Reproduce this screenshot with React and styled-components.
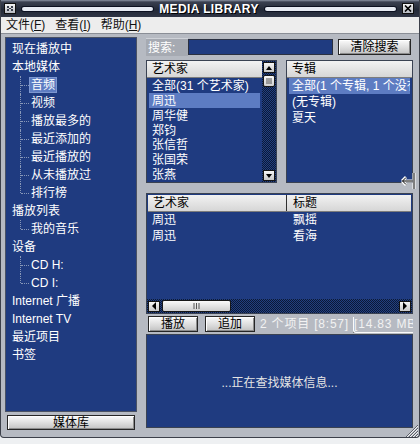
import React from "react";
import styled, { createGlobalStyle } from "styled-components";

const FONT = `"Liberation Sans", "Noto Sans CJK SC", sans-serif`;
const BLUE = "#1f3b80";
const HILITE = "#5d7cc2";
const FRAME = "#b6bac2";
const DITHER = `repeating-conic-gradient(#22407f 0 25%, #0b1838 0 50%) 0 0 / 2px 2px`;

const Global = createGlobalStyle`
  * { box-sizing: border-box; }
  html, body { margin: 0; padding: 0; background: #eef0f2; }
  body { font-family: ${FONT}; font-size: 12px; }
`;

const Window = styled.div`
  position: relative;
  width: 420px;
  height: 438px;
  display: flex;
  flex-direction: column;
  background: ${FRAME};
  border: 1px solid #3c404a;
  border-top: none;
  border-radius: 0 0 4px 4px;
  overflow: hidden;
`;

const TitleBar = styled.div`
  height: 17px;
  flex: none;
  display: flex;
  align-items: center;
  gap: 6px;
  padding: 0 5px 0 3px;
  background: linear-gradient(#8a92a2 0, #3a4050 2px, #232937 55%, #2f3545 100%);
`;

const Groove = styled.div`
  flex: 1;
  height: 4px;
  border-radius: 3px;
  background: #e6eaf2;
  box-shadow: 0 0 0 1px #0c1020;
`;

const Title = styled.div`
  color: #fff;
  font: bold 12px "Liberation Sans", sans-serif;
  letter-spacing: 0.4px;
  text-shadow: 1px 1px 0 #000;
  white-space: nowrap;
`;

const TitleBox = styled.div`
  width: 12px;
  height: 11px;
  display: flex;
  align-items: center;
  justify-content: center;
  background: linear-gradient(#f4f4f4, #b8bcc4);
  border: 1px solid #101010;
`;

const MenuBar = styled.div`
  height: 17px;
  flex: none;
  display: flex;
  align-items: center;
  gap: 10px;
  padding-left: 5px;
  background: #ededed;
  border-bottom: 1px solid #8a8e96;
`;

const MenuItem = styled.span`
  color: #111;
  line-height: 16px;
  white-space: nowrap;
`;

const Body = styled.div`
  flex: 1;
  min-height: 0;
  display: flex;
  padding: 3px 6px 7px 4px;
`;

const LeftPane = styled.div`
  width: 132px;
  flex: none;
  display: flex;
  flex-direction: column;
`;

const TreeBox = styled.div`
  flex: 1;
  background: ${BLUE};
  border: 1px solid #4a5264;
  padding-top: 2px;
`;

const TreeRow = styled.div`
  position: relative;
  height: 18px;
  line-height: 18px;
  padding-left: ${(p) => (p.$child ? 23 : 6)}px;
  color: #fff;
  white-space: nowrap;
  ${(p) =>
    p.$child &&
    `
    &::before {
      content: "";
      position: absolute;
      left: 14px;
      top: 0;
      height: ${p.$last ? "9px" : "18px"};
      border-left: 1px dotted #8797b8;
    }
    &::after {
      content: "";
      position: absolute;
      left: 15px;
      top: 9px;
      width: 8px;
      border-top: 1px dotted #8797b8;
    }
  `}
`;

const TreeLabel = styled.span`
  display: inline-block;
  height: 16px;
  line-height: 16px;
  padding: 0 2px;
  background: ${(p) => (p.$sel ? HILITE : "transparent")};
  box-shadow: ${(p) => (p.$sel ? "inset 0 0 0 1px #7d97d0" : "none")};
`;

const Button = styled.div`
  width: ${(p) => (p.$w ? `${p.$w}px` : "auto")};
  height: ${(p) => p.$h || 16}px;
  flex: none;
  display: flex;
  align-items: center;
  justify-content: center;
  background: linear-gradient(#fbfbfb, #dadada 60%, #c2c2c2);
  border: 1px solid #262626;
  box-shadow: inset 1px 1px 0 #fff, inset -1px -1px 0 #8c8c8c;
  color: #000;
  line-height: 1;
  white-space: nowrap;
`;

const LibButton = styled(Button)`
  margin-top: 3px;
  margin-left: 2px;
`;

const VSplit = styled.div`
  width: 8px;
  flex: none;
`;

const RightPane = styled.div`
  width: 268px;
  flex: none;
  display: flex;
  flex-direction: column;
  padding-left: 1px;
`;

const SearchRow = styled.div`
  height: 20px;
  flex: none;
  display: flex;
  align-items: center;
`;

const SearchLabel = styled.div`
  width: 42px;
  height: 18px;
  line-height: 18px;
  padding-left: 2px;
  color: #fff;
  background: #a6aab2;
  border-top: 1px solid #cfd2d8;
`;

const SearchInput = styled.div`
  width: 145px;
  height: 16px;
  background: ${BLUE};
  border: 1px solid #2a3040;
  margin-right: 5px;
`;

const TopLists = styled.div`
  height: 123px;
  flex: none;
  margin-top: 3px;
  display: flex;
  gap: 9px;
`;

const ListBox = styled.div`
  width: ${(p) => p.$w}px;
  flex: ${(p) => (p.$w ? "none" : 1)};
  display: flex;
  background: ${BLUE};
  border: 1px solid #3a4252;
  overflow: hidden;
`;

const ListCol = styled.div`
  flex: 1;
  min-width: 0;
  display: flex;
  flex-direction: column;
`;

const Header = styled.div`
  height: 17px;
  flex: none;
  display: flex;
  background: linear-gradient(#f2f2f2, #d6d6d6);
  border-bottom: 1px solid #7c7c7c;
  color: #000;
`;

const HeaderCell = styled.div`
  width: ${(p) => (p.$w ? `${p.$w}px` : "auto")};
  flex: ${(p) => (p.$w ? "none" : 1)};
  line-height: 16px;
  padding-left: ${(p) => p.$pad || 5}px;
  border-right: ${(p) => (p.$divider ? "1px solid #303030" : "none")};
  white-space: nowrap;
`;

const Row = styled.div`
  height: 16px;
  line-height: 16px;
  margin: 0 2px;
  padding-left: 3px;
  color: #fff;
  white-space: nowrap;
  overflow: hidden;
  background: ${(p) => (p.$sel ? HILITE : "transparent")};
`;

const VScroll = styled.div`
  width: 14px;
  flex: none;
  display: flex;
  flex-direction: column;
  align-items: center;
  gap: 2px;
  padding: 1px 0;
  background: ${DITHER};
`;

const Arrow = styled.div`
  width: 12px;
  height: 11px;
  flex: none;
  display: flex;
  align-items: center;
  justify-content: center;
  background: linear-gradient(#f6f6f6, #c8c8c8);
  border: 1px solid #141414;
`;

const Thumb = styled.div`
  width: ${(p) => p.$w || 12}px;
  height: ${(p) => p.$h || 12}px;
  flex: none;
  display: flex;
  align-items: center;
  justify-content: center;
  background: linear-gradient(#fafafa, #cfcfcf);
  border: 1px solid #181818;
  border-radius: 2px;
  margin-left: ${(p) => p.$ml || 0}px;
`;

const Fill = styled.div`
  flex: 1;
`;

const HSplit = styled.div`
  height: 10px;
  flex: none;
`;

const TrackBox = styled.div`
  height: 121px;
  flex: none;
  display: flex;
  flex-direction: column;
  background: ${BLUE};
  border: 1px solid #3a4252;
  padding-top: 1px;
`;

const TrackHeader = styled(Header)`
  margin: 0 1px;
`;

const TrackRows = styled.div`
  flex: 1;
`;

const TrackRow = styled.div`
  height: 16px;
  line-height: 16px;
  display: flex;
  color: #fff;
`;

const TrackCell = styled.div`
  width: ${(p) => (p.$w ? `${p.$w}px` : "auto")};
  flex: ${(p) => (p.$w ? "none" : 1)};
  padding-left: ${(p) => p.$pad}px;
  white-space: nowrap;
`;

const HScroll = styled.div`
  height: 14px;
  flex: none;
  display: flex;
  align-items: center;
  padding: 0 1px;
  background: ${DITHER};
`;

const ButtonRow = styled.div`
  height: 19px;
  flex: none;
  display: flex;
  align-items: center;
  gap: 7px;
  padding-left: 2px;
  overflow: hidden;
`;

const Status = styled.div`
  color: #f2f2f2;
  white-space: nowrap;
  margin-left: -2px;
  letter-spacing: 0.8px;
`;

const StatusField = styled.span`
  display: inline-block;
  padding-bottom: 1px;
  border-bottom: 1px solid #fafafa;
  border-left: 1px solid #fafafa;
  box-shadow: 0 1px 0 #3a3a3a;
  border-radius: 0 0 0 3px;
`;

const InfoPanel = styled.div`
  flex: 1;
  margin-top: 1px;
  margin-bottom: 2px;
  display: flex;
  align-items: center;
  justify-content: center;
  background: ${BLUE};
  border: 1px solid #3a4252;
  color: #e4e4e4;
`;

const Overlay = styled.svg`
  position: absolute;
  left: ${(p) => p.$x}px;
  top: ${(p) => p.$y}px;
`;

const Tri = ({ dir }) => {
  const pts = {
    up: "1,5 4,1 7,5",
    down: "1,1 4,5 7,1",
    left: "5,0 1,4 5,8",
    right: "1,0 5,4 1,8",
  }[dir];
  const w = dir === "up" || dir === "down" ? 8 : 6;
  const h = dir === "up" || dir === "down" ? 6 : 8;
  return (
    <svg width={w} height={h} viewBox={`0 0 ${w} ${h}`}>
      <polygon points={pts} fill="#000" />
    </svg>
  );
};

const tree = [
  { t: "现在播放中" },
  { t: "本地媒体" },
  { t: "音频", c: 1, sel: 1 },
  { t: "视频", c: 1 },
  { t: "播放最多的", c: 1 },
  { t: "最近添加的", c: 1 },
  { t: "最近播放的", c: 1 },
  { t: "从未播放过", c: 1 },
  { t: "排行榜", c: 1, last: 1 },
  { t: "播放列表" },
  { t: "我的音乐", c: 1, last: 1 },
  { t: "设备" },
  { t: "CD H:", c: 1 },
  { t: "CD I:", c: 1, last: 1 },
  { t: "Internet 广播" },
  { t: "Internet TV" },
  { t: "最近项目" },
  { t: "书签" },
];

const artists = ["全部(31 个艺术家)", "周迅", "周华健", "郑钧", "张信哲", "张国荣", "张燕"];
const albums = ["全部(1 个专辑, 1 个没有专辑)", "(无专辑)", "夏天"];
const tracks = [
  ["周迅", "飘摇"],
  ["周迅", "看海"],
];

export default function App() {
  return (
    <>
      <Global />
      <Window>
        <TitleBar>
          <TitleBox>
            <svg width="8" height="7" viewBox="0 0 8 7">
              <path d="M1 1h2v2H1zM5 1h2v2H5zM3 3h2v1H3zM1 4h2v2H1zM5 4h2v2H5z" fill="#3a3f4c" />
            </svg>
          </TitleBox>
          <Groove />
          <Title>MEDIA LIBRARY</Title>
          <Groove />
          <TitleBox>
            <svg width="8" height="7" viewBox="0 0 8 7">
              <path d="M1 0.5L7 6.5M7 0.5L1 6.5" stroke="#000" strokeWidth="1.6" />
            </svg>
          </TitleBox>
        </TitleBar>
        <MenuBar>
          <MenuItem>文件(<u>F</u>)</MenuItem>
          <MenuItem>查看(<u>I</u>)</MenuItem>
          <MenuItem>帮助(<u>H</u>)</MenuItem>
        </MenuBar>
        <Body>
          <LeftPane>
            <TreeBox>
              {tree.map((n) => (
                <TreeRow key={n.t} $child={!!n.c} $last={!!n.last}>
                  {n.c ? <TreeLabel $sel={!!n.sel}>{n.t}</TreeLabel> : n.t}
                </TreeRow>
              ))}
            </TreeBox>
            <LibButton $h={15} $w={128}>媒体库</LibButton>
          </LeftPane>
          <VSplit />
          <RightPane>
            <SearchRow>
              <SearchLabel>搜索:</SearchLabel>
              <SearchInput />
              <Button $w={73}>清除搜索</Button>
            </SearchRow>
            <TopLists>
              <ListBox $w={131}>
                <ListCol>
                  <Header>
                    <HeaderCell>艺术家</HeaderCell>
                  </Header>
                  {artists.map((a, i) => (
                    <Row key={a} $sel={i === 1}>{a}</Row>
                  ))}
                </ListCol>
                <VScroll>
                  <Arrow><Tri dir="up" /></Arrow>
                  <Thumb $h={12}>
                    <svg width="6" height="6" viewBox="0 0 6 6">
                      <path d="M0 1h6M0 3h6M0 5h6" stroke="#555" strokeWidth="1" />
                    </svg>
                  </Thumb>
                  <Fill />
                  <Arrow><Tri dir="down" /></Arrow>
                </VScroll>
              </ListBox>
              <ListBox>
                <ListCol>
                  <Header>
                    <HeaderCell>专辑</HeaderCell>
                  </Header>
                  {albums.map((a, i) => (
                    <Row key={a} $sel={i === 0}>{a}</Row>
                  ))}
                </ListCol>
              </ListBox>
            </TopLists>
            <HSplit />
            <TrackBox>
              <TrackHeader>
                <HeaderCell $w={139} $divider>艺术家</HeaderCell>
                <HeaderCell $pad={6}>标题</HeaderCell>
              </TrackHeader>
              <TrackRows>
                {tracks.map(([a, t]) => (
                  <TrackRow key={t}>
                    <TrackCell $w={140} $pad={5}>{a}</TrackCell>
                    <TrackCell $pad={6}>{t}</TrackCell>
                  </TrackRow>
                ))}
              </TrackRows>
              <HScroll>
                <Arrow><Tri dir="left" /></Arrow>
                <Thumb $w={69} $h={12} $ml={2}>
                  <svg width="7" height="6" viewBox="0 0 7 6">
                    <path d="M1 0v6M3.5 0v6M6 0v6" stroke="#555" strokeWidth="1" />
                  </svg>
                </Thumb>
                <Fill />
                <Arrow><Tri dir="right" /></Arrow>
              </HScroll>
            </TrackBox>
            <ButtonRow>
              <Button $w={50}>播放</Button>
              <Button $w={50}>追加</Button>
              <Status>
                2 个项目 [8:57] <StatusField>[14.83 MB]</StatusField>
              </Status>
            </ButtonRow>
            <InfoPanel>...正在查找媒体信息...</InfoPanel>
          </RightPane>
        </Body>
        <Overlay $x={400} $y={172} width="16" height="18" viewBox="0 0 16 18">
          <path d="M13 1v16" stroke="#fff" strokeWidth="3" />
          <path d="M13 1v16" stroke="#000" strokeWidth="1" />
          <path d="M1 9h10M1 9l4-4M1 9l4 4" stroke="#fff" strokeWidth="3" fill="none" />
          <path d="M1.5 9h10M1.5 9l3.5-3.5M1.5 9l3.5 3.5" stroke="#000" strokeWidth="1" fill="none" />
        </Overlay>
        <Overlay $x={404} $y={424} width="14" height="13" viewBox="0 0 14 13">
          <path d="M13 1L1 13M13 4L4 13M13 7L7 13M13 10L10 13" stroke="#5a5e68" strokeWidth="1" />
          <path d="M13 2L2 13M13 5L5 13M13 8L8 13M13 11L11 13" stroke="#f0f0f0" strokeWidth="1" />
        </Overlay>
      </Window>
    </>
  );
}
